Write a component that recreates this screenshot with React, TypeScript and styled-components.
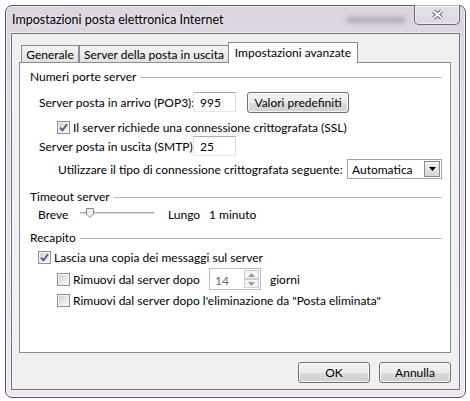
import styled, { createGlobalStyle } from "styled-components"

const Global = createGlobalStyle`
  body {
    margin: 0;
    background: #fff;
    font-family: "Lato", "Liberation Sans", sans-serif;
    font-size: 12px;
    color: #000;
  }
`

const Window = styled.div`
  margin: 5px;
  width: 461px;
  height: 393px;
  box-sizing: border-box;
  border: 1px solid #545463;
  border-radius: 7px;
  background: linear-gradient(180deg, #dcd5df 0%, #e3dbe6 35%, #ece2ef 75%, #f1e5f2 100%);
  box-shadow: inset 0 0 0 1px rgba(255, 255, 255, 0.6);
  display: flex;
  flex-direction: column;
`

const TitleBar = styled.div`
  height: 27px;
  display: flex;
  align-items: flex-start;
  padding-left: 6px;
`

const Title = styled.div`
  margin-top: 6px;
  line-height: 16px;
  font-size: 12.5px;
  text-shadow: 0 0 6px rgba(255, 255, 255, 0.9);
`

const Smudge = styled.div`
  margin: 11px 8px 0 auto;
  width: 60px;
  height: 6px;
  border-radius: 3px;
  background: rgba(120, 115, 125, 0.45);
  filter: blur(2.5px);
`

const CloseButton = styled.div`
  margin: -1px 5px 0 0;
  width: 46px;
  height: 20px;
  box-sizing: border-box;
  border: 1px solid #6b6a78;
  border-top: none;
  border-radius: 0 0 5px 5px;
  background: linear-gradient(180deg, rgba(255, 255, 255, 0.25), rgba(255, 255, 255, 0.05));
  box-shadow: inset 0 0 0 1px rgba(255, 255, 255, 0.45);
  display: flex;
  align-items: center;
  justify-content: center;
`

const Client = styled.div`
  flex: 1;
  margin: 0 5px 7px 5px;
  border: 1px solid #747483;
  background: #f0f0f0;
  padding: 8px 8px 6px 7px;
  display: flex;
  flex-direction: column;
  box-shadow: 0 0 0 1px rgba(255, 255, 255, 0.5);
`

const TabStrip = styled.div`
  height: 20px;
  display: flex;
  align-items: flex-end;
  padding-left: 2px;
`

const Tab = styled.div<{ $w: number; $active?: boolean }>`
  width: ${(p) => p.$w}px;
  height: ${(p) => (p.$active ? 21 : 17)}px;
  margin-bottom: ${(p) => (p.$active ? -1 : 0)}px;
  margin-left: ${(p) => (p.$active ? -1 : 0)}px;
  box-sizing: border-box;
  border: 1px solid #898c95;
  border-bottom: none;
  background: ${(p) =>
    p.$active ? "#fff" : "linear-gradient(180deg, #f3f3f3 0%, #ebebeb 50%, #e1e1e1 100%)"};
  position: relative;
  z-index: ${(p) => (p.$active ? 1 : 0)};
  display: flex;
  align-items: center;
  justify-content: center;
  padding-bottom: ${(p) => (p.$active ? 2 : 0)}px;
  white-space: nowrap;
`

const Panel = styled.div`
  height: 291px;
  box-sizing: border-box;
  border: 1px solid #898c95;
  background: #fff;
  padding: 0 8px 0 10px;
  display: flex;
  flex-direction: column;
`

const GroupHeader = styled.div<{ $top: number }>`
  height: 16px;
  margin-top: ${(p) => p.$top}px;
  display: flex;
  align-items: center;
  white-space: nowrap;

  &::after {
    content: "";
    flex: 1;
    height: 1px;
    margin-left: 4px;
    margin-top: 2px;
    background: #b9b9b9;
  }
`

const Row = styled.div<{ $h: number; $top: number; $indent: number }>`
  height: ${(p) => p.$h}px;
  margin-top: ${(p) => p.$top}px;
  padding-left: ${(p) => p.$indent}px;
  display: flex;
  align-items: center;
  white-space: nowrap;
`

const Label = styled.span<{ $w?: number }>`
  width: ${(p) => (p.$w ? `${p.$w}px` : "auto")};
  flex-shrink: 0;
`

const TextBox = styled.div`
  width: 43px;
  height: 20px;
  box-sizing: border-box;
  border: 1px solid;
  border-color: #abadb3 #dbdfe6 #e3e9ef #e2e3ea;
  padding-left: 6px;
  display: flex;
  align-items: center;
  background: #fff;
`

const Button = styled.div<{ $w: number; $left?: number }>`
  width: ${(p) => p.$w}px;
  height: 21px;
  margin-left: ${(p) => p.$left ?? 0}px;
  box-sizing: border-box;
  border: 1px solid #707070;
  border-radius: 3px;
  background: linear-gradient(180deg, #f2f2f2 0%, #ebebeb 50%, #dddddd 51%, #cfcfcf 100%);
  box-shadow: inset 0 0 0 1px rgba(255, 255, 255, 0.75);
  display: flex;
  align-items: center;
  justify-content: center;
  flex-shrink: 0;
`

const Box = styled.div`
  width: 13px;
  height: 13px;
  box-sizing: border-box;
  border: 1px solid #8e8f8f;
  background: linear-gradient(135deg, #cdcdcd 0%, #e9e9e9 55%, #f7f7f7 100%);
  box-shadow: inset 0 0 0 1px #f4f4f4;
  margin-right: 3px;
  flex-shrink: 0;
  display: flex;
  align-items: center;
  justify-content: center;
`

const Select = styled.div`
  margin-left: auto;
  width: 95px;
  height: 20px;
  box-sizing: border-box;
  border: 1px solid #a2a2a2;
  background: #fff;
  display: flex;
  align-items: center;
  padding: 0 1px 0 4px;
`

const SelectText = styled.span`
  flex: 1;
`

const DropButton = styled.div`
  width: 16px;
  height: 16px;
  box-sizing: border-box;
  border: 1px solid #8a8a8a;
  background: linear-gradient(180deg, #f5f5f5 0%, #e4e4e4 50%, #d4d4d4 100%);
  display: flex;
  align-items: center;
  justify-content: center;
`

const Slider = styled.div`
  width: 74px;
  height: 3px;
  box-sizing: border-box;
  border-top: 1px solid #a8a8a8;
  border-bottom: 1px solid #f4f4f4;
  background: #e2e2e2;
  position: relative;
  margin-top: -2px;
  flex-shrink: 0;
`

const Thumb = styled.svg`
  position: absolute;
  left: 6px;
  top: -5px;
`

const Spinner = styled.div`
  width: 52px;
  height: 22px;
  box-sizing: border-box;
  border: 1px solid #bdbdbd;
  background: #fff;
  display: flex;
  align-items: center;
  color: #6d6d6d;
  padding: 1px 1px 1px 5px;
`

const SpinValue = styled.span`
  flex: 1;
  margin-top: 2px;
`

const SpinButtons = styled.div`
  width: 15px;
  height: 18px;
  display: flex;
  flex-direction: column;
`

const SpinPart = styled.div`
  flex: 1;
  box-sizing: border-box;
  border: 1px solid #d0d0d0;
  background: #f4f4f4;
  display: flex;
  align-items: center;
  justify-content: center;
`

const Footer = styled.div`
  margin-top: 9px;
  display: flex;
  justify-content: flex-end;
  gap: 9px;
`

function Check({ checked }: { checked?: boolean }) {
  return (
    <Box>
      {checked && (
        <svg width="9" height="9" viewBox="0 0 9 9">
          <path d="M1 4.6 L3.5 7.2 L8 1.2" fill="none" stroke="#4b5f8d" strokeWidth="1.9" />
        </svg>
      )}
    </Box>
  )
}

function Arrow({ up, color }: { up?: boolean; color: string }) {
  return (
    <svg width="7" height="4" viewBox="0 0 7 4">
      <path d={up ? "M0 4 L3.5 0 L7 4 Z" : "M0 0 L7 0 L3.5 4 Z"} fill={color} />
    </svg>
  )
}

export default function App() {
  return (
    <>
      <Global />
      <Window>
        <TitleBar>
          <Title>Impostazioni posta elettronica Internet</Title>
          <Smudge />
          <CloseButton>
            <svg width="13" height="11" viewBox="0 0 13 11">
              <path d="M2.5 2 L10.5 9 M10.5 2 L2.5 9" stroke="#66656f" strokeWidth="4" />
              <path d="M2.5 2 L10.5 9 M10.5 2 L2.5 9" stroke="#fff" strokeWidth="2" />
            </svg>
          </CloseButton>
        </TitleBar>
        <Client>
          <TabStrip>
            <Tab $w={58}>Generale</Tab>
            <Tab $w={150}>Server della posta in uscita</Tab>
            <Tab $w={130} $active>
              Impostazioni avanzate
            </Tab>
          </TabStrip>
          <Panel>
            <GroupHeader $top={5}>Numeri porte server</GroupHeader>
            <Row $h={20} $top={8} $indent={9}>
              <Label $w={154}>Server posta in arrivo (POP3):</Label>
              <TextBox>995</TextBox>
              <Button $w={102} $left={11}>
                Valori predefiniti
              </Button>
            </Row>
            <Row $h={14} $top={8} $indent={27}>
              <Check checked />
              <Label>Il server richiede una connessione crittografata (SSL)</Label>
            </Row>
            <Row $h={20} $top={2} $indent={9}>
              <Label $w={154}>Server posta in uscita (SMTP):</Label>
              <TextBox>25</TextBox>
            </Row>
            <Row $h={20} $top={3} $indent={28}>
              <Label>Utilizzare il tipo di connessione crittografata seguente:</Label>
              <Select>
                <SelectText>Automatica</SelectText>
                <DropButton>
                  <Arrow color="#000" />
                </DropButton>
              </Select>
            </Row>

            <GroupHeader $top={9}>Timeout server</GroupHeader>
            <Row $h={16} $top={2} $indent={8}>
              <Label $w={42}>Breve</Label>
              <Slider>
                <Thumb width="8" height="10" viewBox="0 0 8 10">
                  <path d="M0.5 0.5 H7.5 V6 L4 9.5 L0.5 6 Z" fill="#f0f0f0" stroke="#8a8a8a" />
                </Thumb>
              </Slider>
              <Label $w={41} style={{ marginLeft: 14 }}>
                Lungo
              </Label>
              <Label>1 minuto</Label>
            </Row>

            <GroupHeader $top={7}>Recapito</GroupHeader>
            <Row $h={14} $top={5} $indent={8}>
              <Check checked />
              <Label>Lascia una copia dei messaggi sul server</Label>
            </Row>
            <Row $h={22} $top={4} $indent={27}>
              <Check />
              <Label $w={136}>Rimuovi dal server dopo</Label>
              <Spinner>
                <SpinValue>14</SpinValue>
                <SpinButtons>
                  <SpinPart>
                    <Arrow up color="#a0a0a0" />
                  </SpinPart>
                  <SpinPart>
                    <Arrow color="#a0a0a0" />
                  </SpinPart>
                </SpinButtons>
              </Spinner>
              <Label style={{ marginLeft: 9 }}>giorni</Label>
            </Row>
            <Row $h={14} $top={3} $indent={27}>
              <Check />
              <Label>Rimuovi dal server dopo l'eliminazione da "Posta eliminata"</Label>
            </Row>
          </Panel>
          <Footer>
            <Button $w={72}>OK</Button>
            <Button $w={72}>Annulla</Button>
          </Footer>
        </Client>
      </Window>
    </>
  )
}
